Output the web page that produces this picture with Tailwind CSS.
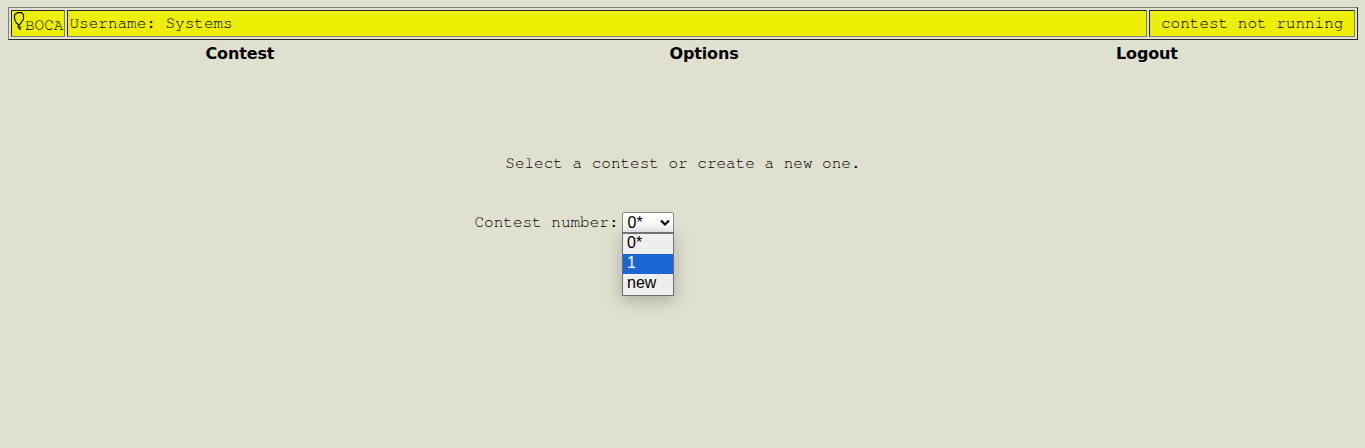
<!DOCTYPE html>
<html lang="en">
<head>
<meta charset="utf-8">
<title>BOCA</title>
<script src="https://cdn.jsdelivr.net/npm/@tailwindcss/browser@4"></script>
</head>
<body class="h-[448px] overflow-hidden bg-[#e0e0d0] pt-[7px] pl-2 font-['FreeMono','Nimbus_Mono_PS','Liberation_Mono',monospace] text-base text-black">
<header class="flex h-[33px] w-[1350px] gap-0.5 border border-t-[#808080] border-l-[#808080] border-r-[#2c2c2c] border-b-[#2c2c2c] p-0.5">
  <div class="flex w-[54px] shrink-0 border border-t-[#2c2c2c] border-l-[#2c2c2c] border-r-[#808080] border-b-[#808080] bg-[#eeee00] pl-px">
    <svg class="mt-px h-[19px] w-[13px] shrink-0" viewBox="0 0 13 19" fill="none" stroke="#000" stroke-width="1.1"><path d="M4.500 .6h4l2 2v4.400L6.500 13H5.500L3 10.500 1.500 7V3zM5.500 13L4.800 15h2.700L6 16.500l1.800 1.300"/></svg>
    <span class="-ml-px mt-[3px] leading-[22px]">BOCA</span>
  </div>
  <div class="flex-1 border border-t-[#2c2c2c] border-l-[#2c2c2c] border-r-[#808080] border-b-[#808080] bg-[#eeee00] pt-px pl-[1.5px] leading-[23px]">Username: Systems</div>
  <div class="w-[206px] border border-t-[#2c2c2c] border-l-[#2c2c2c] border-r-[#808080] border-b-[#808080] bg-[#eeee00] pt-px pl-[11px] leading-[23px] whitespace-nowrap">contest not running</div>
</header>
<nav class="flex h-[27px] w-[1350px] font-['Verdana','DejaVu_Sans',sans-serif] text-base leading-[27px] font-bold tracking-[-0.15px] text-black">
  <a class="w-[464px] pl-[197.500px]">Contest</a>
  <a class="w-[464px] pl-[197.500px]">Options</a>
  <a class="flex-1 pl-[180px]">Logout</a>
</nav>
<main>
  <p class="mt-[85px] pl-[497.300px] leading-[22px]">Select a contest or create a new one.</p>
  <div class="mt-[38px] flex pl-[466.500px] leading-5">
    <span class="w-[147.500px]">Contest number:</span>
    <div class="relative flex h-[22px] w-[52px] justify-between rounded-t-[2px] border border-[#8a8a8a] bg-gradient-to-b from-white from-40% to-[#eeeeee] pr-[3px] pl-[4.500px] font-['Liberation_Sans',sans-serif] text-base leading-5 text-black">
      <span>0*</span>
      <svg class="mt-[6px] h-[8px] w-[10px]" viewBox="0 0 10 8" fill="none" stroke="#000" stroke-width="2.2"><path d="M1 1.500l4 4 4-4"/></svg>
      <ul class="absolute top-[19px] -left-px h-16 w-[52px] border border-t-2 border-[#707070] bg-[#eeeeee] shadow-[0_4px_16px_rgba(0,0,0,0.25)]">
        <li class="h-5 pl-1 leading-[18px]">0*</li>
        <li class="h-5 bg-[#1967d2] pl-1 leading-[18px] text-white">1</li>
        <li class="h-5 pl-1 leading-[18px]">new</li>
      </ul>
    </div>
  </div>
</main>
</body>
</html>
